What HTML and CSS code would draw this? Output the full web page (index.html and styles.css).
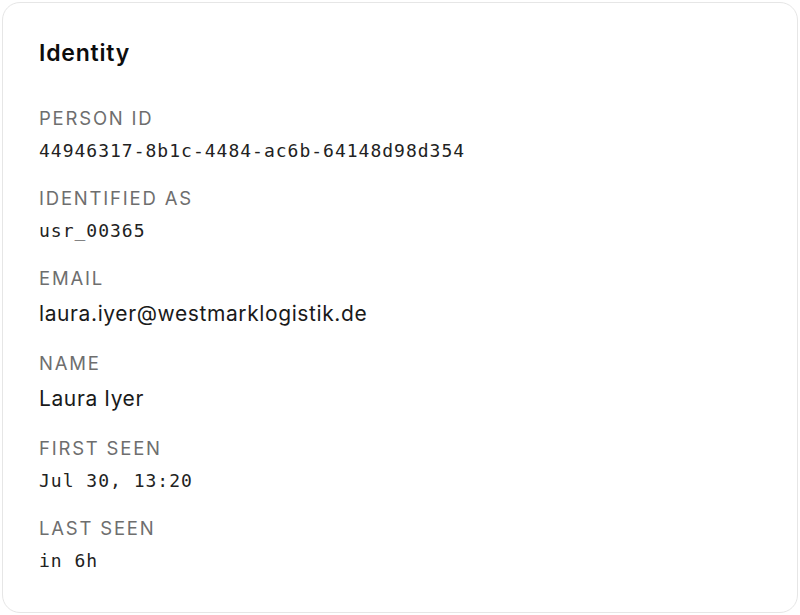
FILE: index.html
```html
<!DOCTYPE html>
<html>
<head>
<meta charset="utf-8">
<link rel="stylesheet" href="styles.css">
</head>
<body>
<section class="card">
  <h2 class="title">Identity</h2>
  <dl class="fields">
    <div class="field">
      <dt class="label">Person ID</dt>
      <dd class="value mono">44946317-8b1c-4484-ac6b-64148d98d354</dd>
    </div>
    <div class="field">
      <dt class="label">Identified as</dt>
      <dd class="value mono">usr_00365</dd>
    </div>
    <div class="field">
      <dt class="label">Email</dt>
      <dd class="value">laura.iyer@westmarklogistik.de</dd>
    </div>
    <div class="field">
      <dt class="label">Name</dt>
      <dd class="value">Laura Iyer</dd>
    </div>
    <div class="field">
      <dt class="label">First seen</dt>
      <dd class="value mono">Jul 30, 13:20</dd>
    </div>
    <div class="field">
      <dt class="label">Last seen</dt>
      <dd class="value mono">in 6h</dd>
    </div>
  </dl>
</section>
</body>
</html>
```
FILE: styles.css
```css
html, body {
  margin: 0;
  padding: 0;
  background: #ffffff;
}
body {
  padding: 2px;
  font-family: Inter, "Noto Sans", sans-serif;
  color: #1a1a1a;
}
.card {
  box-sizing: border-box;
  height: 611px;
  border: 1.5px solid #e6e6e6;
  border-radius: 18px;
  padding: 36px 36px;
  background: #fff;
}
.title {
  margin: 0 0 40px;
  font-size: 23px;
  font-weight: 600;
  line-height: 28px;
  letter-spacing: 0.8px;
  color: #0d0d0d;
}
.fields {
  margin: 0;
  display: flex;
  flex-direction: column;
  gap: 24px;
}
.field {
  display: flex;
  flex-direction: column;
  gap: 10px;
}
.label {
  font-size: 18.5px;
  line-height: 22px;
  letter-spacing: 1.8px;
  text-transform: uppercase;
  color: #6e6e6e;
}
.value {
  margin: 0;
  font-size: 21px;
  line-height: 29px;
  letter-spacing: 0.6px;
  color: #1a1a1a;
}
.mono {
  font-family: "DejaVu Sans Mono", monospace;
  font-size: 18px;
  line-height: 24px;
  letter-spacing: 1px;
  color: #222;
}
```
